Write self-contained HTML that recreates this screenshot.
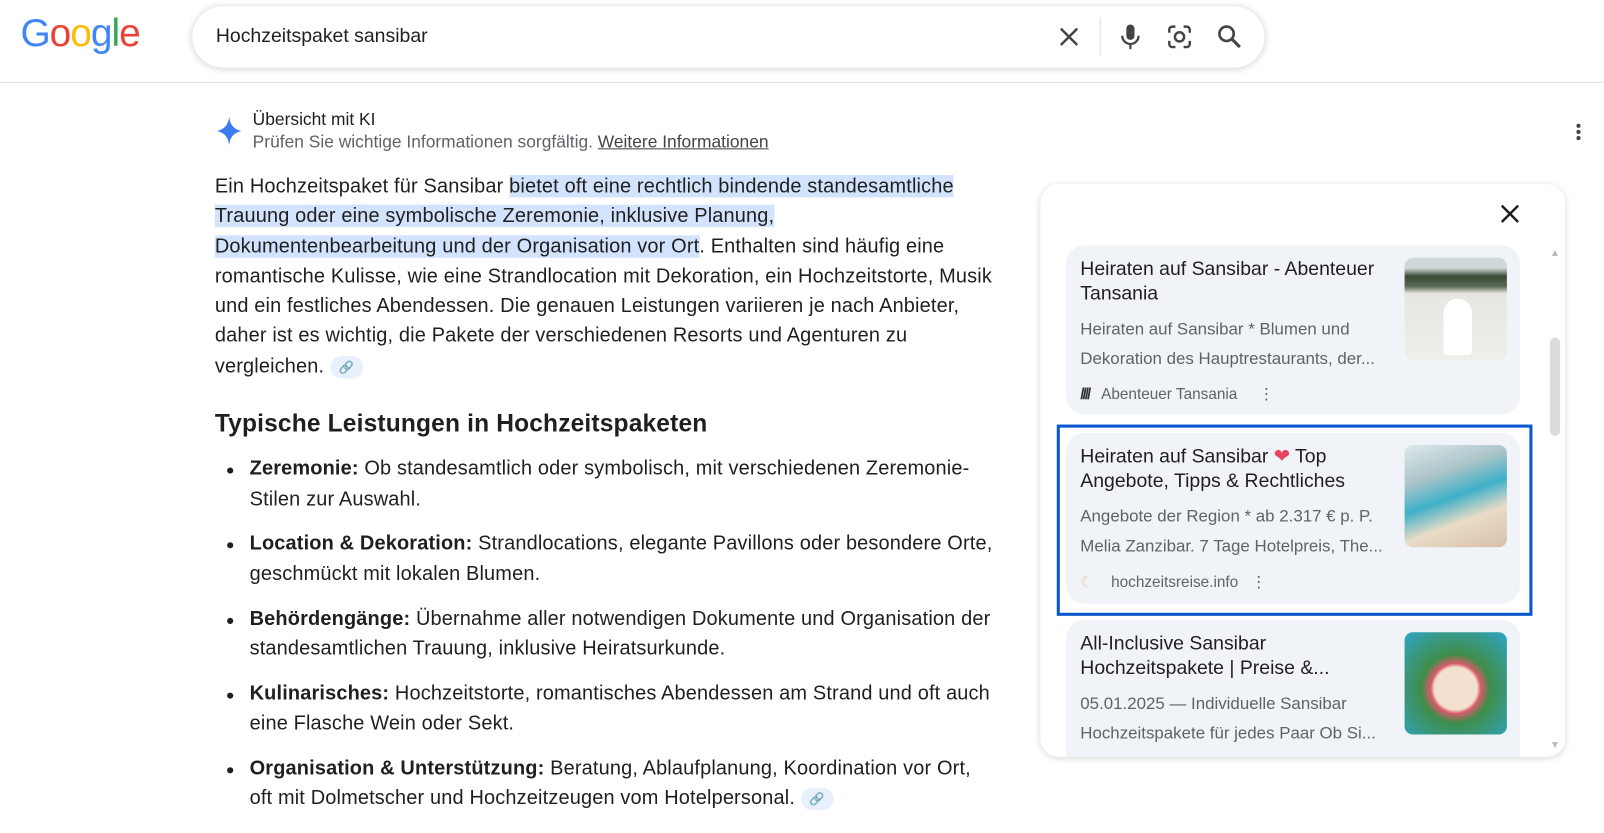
<!DOCTYPE html>
<html><head><meta charset="utf-8"><style>
*{margin:0;padding:0;box-sizing:border-box}
body{width:1604px;height:832px;overflow:hidden;background:#fff;font-family:"Liberation Sans",Arial,sans-serif;color:#1f1f1f;position:relative}
#w{position:absolute;left:0;top:0;width:1568px;height:814px;transform:scale(1.023);transform-origin:0 0}
.abs{position:absolute}
.hdr{left:0;top:0;width:1568px;height:81px;border-bottom:1px solid #dadce0}
.logo{left:20px;top:12px;font-size:38px;letter-spacing:-1px}
.sb{left:187px;top:5px;width:1050px;height:62px;border:1px solid #e8eaed;border-radius:31px;box-shadow:0 1px 6px rgba(32,33,36,.18)}
.q{left:211px;top:25px;font-size:19px;color:#202124}
.main{left:210px;top:168px;width:790px;font-size:19.5px;line-height:29.3px;color:#1f1f1f;white-space:nowrap;letter-spacing:.15px}
.hl{background:#d3e3fd}
.chip{display:inline-block;width:32px;height:22px;border-radius:11px;background:#e8f0fe;vertical-align:middle;text-align:center;font-size:12px;line-height:22px;color:#444}
h2{font-size:24px;font-weight:600;margin:27px 0 15px}
ul{margin-left:34px;list-style:none}
li{position:relative;margin-bottom:14.5px}
li:before{content:"";position:absolute;left:-22px;top:13px;width:6px;height:6px;border-radius:3px;background:#1f1f1f}
.panel{left:1017px;top:180px;width:513px;height:560px;border-radius:18px;box-shadow:0 1px 6px rgba(0,0,0,.15);background:#fff;overflow:hidden}
.card{position:absolute;left:25px;width:444px;background:#f0f4f9;border-radius:18px}
.ct{position:absolute;left:14px;top:12px;width:305px;font-size:19px;line-height:24px;color:#1f1f1f}
.cs{position:absolute;left:14px;width:310px;font-size:16.5px;line-height:29px;color:#5f6368;white-space:nowrap;overflow:hidden}
.src{position:absolute;left:14px;font-size:15px;color:#5f6368}
.img{position:absolute;left:331px;top:12px;width:100px;height:100px;border-radius:8px}
</style></head><body><div id="w">
<div class="abs hdr"></div>
<div class="abs logo"><span style="color:#4285f4">G</span><span style="color:#ea4335">o</span><span style="color:#fbbc05">o</span><span style="color:#4285f4">g</span><span style="color:#34a853">l</span><span style="color:#ea4335">e</span></div>
<div class="abs sb"></div>
<div class="abs q">Hochzeitspaket sansibar</div>
<svg class="abs" style="left:1033px;top:24px" width="24" height="24" viewBox="0 0 24 24"><path d="M4 4L20 20M20 4L4 20" stroke="#444" stroke-width="2.4"/></svg>
<div class="abs" style="left:1075px;top:17px;width:1px;height:38px;background:#dadce0"></div>
<svg class="abs" style="left:1093px;top:22px" width="24" height="28" viewBox="0 0 24 28"><rect x="8" y="2" width="8" height="15" rx="4" fill="#444"/><path d="M4 13a8 8 0 0016 0M12 21v5" stroke="#444" stroke-width="2.2" fill="none"/></svg>
<svg class="abs" style="left:1140px;top:23px" width="26" height="26" viewBox="0 0 26 26"><path d="M3 9V6a3 3 0 013-3h3M17 3h3a3 3 0 013 3v3M3 17v3a3 3 0 003 3h3M23 17v3a3 3 0 01-3 3h-3" stroke="#444" stroke-width="2.4" fill="none"/><circle cx="13" cy="13" r="4.5" stroke="#444" stroke-width="2.4" fill="none"/></svg>
<svg class="abs" style="left:1189px;top:23px" width="26" height="26" viewBox="0 0 26 26"><circle cx="10" cy="10" r="7" stroke="#444" stroke-width="2.6" fill="none"/><path d="M15 15l8 8" stroke="#444" stroke-width="3"/></svg>

<svg class="abs" style="left:210px;top:112px" width="28" height="32" viewBox="0 0 28 32"><path d="M14 2C15 10 18 14 26 16C18 18 15 22 14 30C13 22 10 18 2 16C10 14 13 10 14 2Z" fill="#3c7cf0"/></svg>
<div class="abs" style="left:247px;top:107px;font-size:17px;color:#1f1f1f">Übersicht mit KI</div>
<div class="abs" style="left:247px;top:129px;font-size:17px;color:#5f6368">Prüfen Sie wichtige Informationen sorgfältig. <span style="text-decoration:underline;color:#444">Weitere Informationen</span></div>
<svg class="abs" style="left:1538px;top:120px" width="10" height="20"><circle cx="5" cy="3" r="2" fill="#444"/><circle cx="5" cy="9" r="2" fill="#444"/><circle cx="5" cy="15" r="2" fill="#444"/></svg>

<div class="abs main">Ein Hochzeitspaket für Sansibar <span class="hl">bietet oft eine rechtlich bindende standesamtliche</span><br><span class="hl">Trauung oder eine symbolische Zeremonie, inklusive Planung,</span><br><span class="hl">Dokumentenbearbeitung und der Organisation vor Ort</span>. Enthalten sind häufig eine<br>romantische Kulisse, wie eine Strandlocation mit Dekoration, ein Hochzeitstorte, Musik<br>und ein festliches Abendessen. Die genauen Leistungen variieren je nach Anbieter,<br>daher ist es wichtig, die Pakete der verschiedenen Resorts und Agenturen zu<br>vergleichen. <span class="chip">🔗</span>
<h2>Typische Leistungen in Hochzeitspaketen</h2>
<ul>
<li><b>Zeremonie:</b> Ob standesamtlich oder symbolisch, mit verschiedenen Zeremonie-<br>Stilen zur Auswahl.</li>
<li><b>Location &amp; Dekoration:</b> Strandlocations, elegante Pavillons oder besondere Orte,<br>geschmückt mit lokalen Blumen.</li>
<li><b>Behördengänge:</b> Übernahme aller notwendigen Dokumente und Organisation der<br>standesamtlichen Trauung, inklusive Heiratsurkunde.</li>
<li><b>Kulinarisches:</b> Hochzeitstorte, romantisches Abendessen am Strand und oft auch<br>eine Flasche Wein oder Sekt.</li>
<li><b>Organisation &amp; Unterstützung:</b> Beratung, Ablaufplanung, Koordination vor Ort,<br>oft mit Dolmetscher und Hochzeitzeugen vom Hotelpersonal. <span class="chip">🔗</span></li>
</ul></div>

<div class="abs panel">
<svg class="abs" style="left:448px;top:18px" width="22" height="22" viewBox="0 0 22 22"><path d="M3 3L19 19M19 3L3 19" stroke="#1f1f1f" stroke-width="2.4"/></svg>
<div class="card" style="top:60px;height:165px">
<div class="ct">Heiraten auf Sansibar - Abenteuer Tansania</div>
<div class="cs" style="top:68px">Heiraten auf Sansibar * Blumen und<br>Dekoration des Hauptrestaurants, der...</div>
<div class="src" style="top:136px"><b style="color:#333;letter-spacing:-2px">////</b>&nbsp;&nbsp; Abenteuer Tansania &nbsp;&nbsp;&nbsp;&nbsp;⋮</div>
<div class="img" style="background:linear-gradient(#cfd8d8 0,#cfd8d8 10%,#3a4a35 18%,#5a6a55 28%,#e8e6e2 35%,#f0eeea 100%)"><div style="position:absolute;left:38px;top:40px;width:28px;height:55px;background:#fff;border-radius:14px 14px 4px 4px"></div></div>
</div>
<div class="abs" style="left:16px;top:235px;width:465px;height:187px;border:3px solid #0b57d0"></div>
<div class="card" style="top:243px;height:167px">
<div class="ct">Heiraten auf Sansibar <span style="color:#e94560">❤</span> Top Angebote, Tipps &amp; Rechtliches</div>
<div class="cs" style="top:68px">Angebote der Region * ab 2.317 € p. P.<br>Melia Zanzibar. 7 Tage Hotelpreis, The...</div>
<div class="src" style="top:137px"><span style="color:#f3c9a8">☾</span>&nbsp;&nbsp;&nbsp; hochzeitsreise.info &nbsp;&nbsp;⋮</div>
<div class="img" style="background:linear-gradient(160deg,#dfe8ec 0,#a9c4c8 30%,#3fb0c8 50%,#e9dcc7 70%,#d7bfa9 100%)"></div>
</div>
<div class="card" style="top:426px;height:160px">
<div class="ct">All-Inclusive Sansibar Hochzeitspakete | Preise &amp;...</div>
<div class="cs" style="top:68px">05.01.2025 — Individuelle Sansibar<br>Hochzeitspakete für jedes Paar Ob Si...</div>
<div class="img" style="background:radial-gradient(circle at 50% 55%,#f4e0cf 0,#f4e0cf 28%,#d85a6a 33%,#3f8d4a 45%,#2fa6c8 100%)"></div>
</div>
<div class="abs" style="left:498px;top:150px;width:10px;height:96px;background:#dadce0;border-radius:5px"></div>
<div class="abs" style="left:498px;top:62px;font-size:10px;color:#bbb">▲</div>
<div class="abs" style="left:498px;top:543px;font-size:10px;color:#bbb">▼</div>
</div>
</div></body></html>
